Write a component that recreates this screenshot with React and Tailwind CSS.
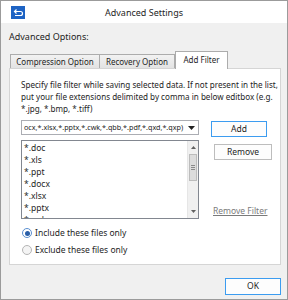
import React from "react";

const files = ["*.doc", "*.xls", "*.ppt", "*.docx", "*.xlsx", "*.pptx", "*.cwk"];

function Radio({ checked, label }) {
  return (
    <label className="flex items-center gap-[3px] h-[12px]">
      <span
        className={
          "w-[10px] h-[10px] rounded-full border flex items-center justify-center " +
          (checked ? "border-[#5a8fd0] bg-white" : "border-[#b5b5b5] bg-[#f4f4f4]")
        }
      >
        {checked && <span className="w-[5px] h-[5px] rounded-full bg-[#2a5fa8]" />}
      </span>
      <span>{label}</span>
    </label>
  );
}

export default function App() {
  return (
    <div className="w-[288px] h-[300px] border border-[#9b9b9b] bg-[#f0f0f0] flex flex-col font-['Noto_Sans',sans-serif] text-[#1e1e1e] overflow-hidden">
      {/* TITLE BAR */}
      <div className="h-[22px] bg-white relative flex items-center justify-center shrink-0">
        <svg className="absolute left-[10px] top-[5px]" width="14" height="13" viewBox="0 0 14 13">
          <rect width="14" height="13" fill="#1d63c4" />
          <path d="M3.5 5.5h6a2 2 0 0 1 0 4H4" stroke="#fff" strokeWidth="1.2" fill="none" />
          <path d="M5.5 3.5l-2 2 2 2" stroke="#fff" strokeWidth="1.2" fill="none" />
        </svg>
        <span className="text-[9px] leading-none">Advanced Settings</span>
      </div>

      {/* BODY */}
      <div className="flex-1 flex flex-col pl-[8px] pr-[6px]">
        <div className="text-[9px] leading-[12px] mt-[8px]">Advanced Options:</div>

        {/* TABS */}
        <div className="flex items-end mt-[8px] pl-[1px] h-[17px] text-[8px] leading-none relative z-10">
          <div className="w-[90px] h-[14px] border border-b-0 border-[#acacac] bg-gradient-to-b from-[#f2f2f2] to-[#e3e3e3] flex items-center justify-center">
            Compression Option
          </div>
          <div className="w-[75px] h-[14px] border border-b-0 border-l-0 border-[#acacac] bg-gradient-to-b from-[#f2f2f2] to-[#e3e3e3] flex items-center justify-center">
            Recovery Option
          </div>
          <div className="w-[53px] h-[18px] -mb-[1px] border border-b-0 border-[#acacac] bg-white flex items-start pt-[4px] justify-center">
            Add Filter
          </div>
        </div>

        {/* PANEL */}
        <div className="w-[272px] h-[197px] border border-[#d5d5d5] bg-white pl-[11px] pt-[10px] flex flex-col">
          <p className="text-[8.1px] leading-[12px] whitespace-nowrap">
            Specify file filter while saving selected data. If not present in the list,
            <br />
            put your file extensions delimited by comma in below editbox (e.g.
            <br />
            *.jpg, *.bmp, *.tiff)
          </p>

          <div className="flex gap-[12px] mt-[5px]">
            <div className="flex flex-col gap-[5px] w-[178px]">
              <div className="h-[15px] border border-[#abadb3] flex items-center pl-[2px] pr-[3px] text-[7.2px]">
                <span className="flex-1 overflow-hidden whitespace-nowrap">
                  ocx,*.xlsx,*.pptx,*.cwk,*.qbb,*.pdf,*.qxd,*.qxp)
                </span>
                <svg width="7" height="4" viewBox="0 0 7 4">
                  <path d="M0 0h7L3.5 4z" fill="#222" />
                </svg>
              </div>
              <div className="h-[79px] border border-[#828790] flex overflow-hidden">
                <ul className="flex-1 pl-[2px] pt-[1px] text-[8.5px] leading-[12px]">
                  {files.map((f) => (
                    <li key={f}>{f}</li>
                  ))}
                </ul>
                <div className="w-[11px] bg-[#f0f0f0] border-l border-[#e6e6e6] flex flex-col items-center">
                  <svg className="mt-[5px]" width="5" height="3" viewBox="0 0 5 3">
                    <path d="M0 3L2.5 0 5 3z" fill="#606060" />
                  </svg>
                  <div className="mt-[5px] w-[8px] h-[27px] bg-[#dcdcdc] border border-[#bcbcbc] flex flex-col items-center justify-center gap-[1px]">
                    <span className="w-[4px] h-px bg-[#8a8a8a]" />
                    <span className="w-[4px] h-px bg-[#8a8a8a]" />
                    <span className="w-[4px] h-px bg-[#8a8a8a]" />
                  </div>
                  <div className="flex-1" />
                  <svg className="mb-[5px]" width="5" height="3" viewBox="0 0 5 3">
                    <path d="M0 0h5L2.5 3z" fill="#606060" />
                  </svg>
                </div>
              </div>
            </div>

            <div className="flex flex-col text-[8.5px] w-[62px]">
              <button className="w-[56px] h-[16px] mt-[1px] border border-[#3c9cf0] bg-[#fdfdfd] leading-none">
                Add
              </button>
              <button className="w-[58px] h-[16px] ml-[3px] mt-[7px] border border-[#bdbdbd] bg-[#fdfdfd] leading-none">
                Remove
              </button>
              <div className="flex-1" />
              <span className="ml-[2px] mb-[2px] text-[#7a7a7a] underline leading-[12px]">Remove Filter</span>
            </div>
          </div>

          <div className="flex flex-col gap-[5px] mt-[8px] ml-[1px] text-[8.5px]">
            <Radio checked label="Include these files only" />
            <Radio label="Exclude these files only" />
          </div>
        </div>

        {/* FOOTER */}
        <div className="flex justify-end mt-[13px]">
          <button className="w-[56px] h-[17px] border border-[#3c9cf0] bg-[#fdfdfd] text-[8.5px] leading-none">
            OK
          </button>
        </div>
      </div>
    </div>
  );
}
